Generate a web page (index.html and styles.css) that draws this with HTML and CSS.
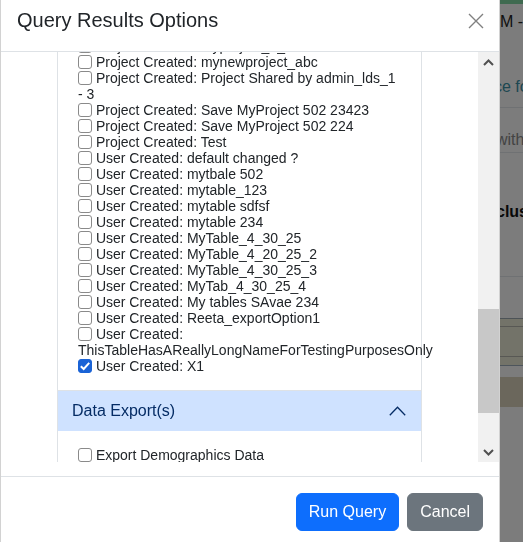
FILE: index.html
```html
<!DOCTYPE html>
<html lang="en">
<head>
    <meta charset="UTF-8">
    <meta name="viewport" content="width=device-width, initial-scale=1.0">
    <title>Query Results Options</title>
    <link rel="stylesheet" href="styles.css">
</head>
<body>
    <!-- Page behind the modal -->
    <div class="page">
        <div class="page-topbar"></div>
        <div class="page-title">M -</div>
        <div class="page-row page-link">ce fo</div>
        <div class="page-row page-muted">with</div>
        <div class="page-row page-bold">clus</div>
        <div class="page-gap"></div>
        <div class="page-band band-a"></div>
        <div class="page-band band-b"></div>
        <div class="page-band band-c"></div>
        <div class="page-band band-d"></div>
        <div class="page-band band-e"></div>
    </div>
    <div class="backdrop"></div>

    <!-- Modal -->
    <div class="modal">
        <div class="modal-header">
            <h5 class="modal-title">Query Results Options</h5>
            <button class="btn-close" aria-label="Close">
                <svg width="16" height="16" viewBox="0 0 16 16"><path d="M1 1L15 15M15 1L1 15" stroke="#808080" stroke-width="1.4" fill="none"/></svg>
            </button>
        </div>

        <div class="modal-body">
            <div class="scroll-area">
                <div class="scroll-content">
                    <div class="accordion">
                        <div class="accordion-item">
                            <div class="accordion-body">
                                <label class="check-row"><input type="checkbox"> Project Created: myproject_1_abc</label>
                                <label class="check-row"><input type="checkbox"> Project Created: mynewproject_abc</label>
                                <label class="check-row"><input type="checkbox"> Project Created: Project Shared by admin_lds_1 - 3</label>
                                <label class="check-row"><input type="checkbox"> Project Created: Save MyProject 502 23423</label>
                                <label class="check-row"><input type="checkbox"> Project Created: Save MyProject 502 224</label>
                                <label class="check-row"><input type="checkbox"> Project Created: Test</label>
                                <label class="check-row"><input type="checkbox"> User Created: default changed ?</label>
                                <label class="check-row"><input type="checkbox"> User Created: mytbale 502</label>
                                <label class="check-row"><input type="checkbox"> User Created: mytable_123</label>
                                <label class="check-row"><input type="checkbox"> User Created: mytable sdfsf</label>
                                <label class="check-row"><input type="checkbox"> User Created: mytable 234</label>
                                <label class="check-row"><input type="checkbox"> User Created: MyTable_4_30_25</label>
                                <label class="check-row"><input type="checkbox"> User Created: MyTable_4_20_25_2</label>
                                <label class="check-row"><input type="checkbox"> User Created: MyTable_4_30_25_3</label>
                                <label class="check-row"><input type="checkbox"> User Created: MyTab_4_30_25_4</label>
                                <label class="check-row"><input type="checkbox"> User Created: My tables SAvae 234</label>
                                <label class="check-row"><input type="checkbox"> User Created: Reeta_exportOption1</label>
                                <label class="check-row"><input type="checkbox"> User Created: ThisTableHasAReallyLongNameForTestingPurposesOnly</label>
                                <label class="check-row"><input type="checkbox" checked> User Created: X1</label>
                            </div>
                        </div>
                        <div class="accordion-item">
                            <button class="accordion-button">
                                <span>Data Export(s)</span>
                                <svg width="17" height="10" viewBox="0 0 17 10"><path d="M0.8 9.2L8.5 1.3L16.2 9.2" stroke="#052c65" stroke-width="1.3" fill="none"/></svg>
                            </button>
                            <div class="accordion-body">
                                <label class="check-row"><input type="checkbox"> Export Demographics Data</label>
                                <label class="check-row"><input type="checkbox"> Export Diagnosis Data</label>
                            </div>
                        </div>
                    </div>
                </div>

                <!-- scrollbar -->
                <div class="scrollbar">
                    <div class="scroll-arrow">
                        <svg width="11" height="7" viewBox="0 0 11 7"><path d="M1 6L5.5 1.5L10 6" stroke="#505050" stroke-width="2" fill="none"/></svg>
                    </div>
                    <div class="scroll-track"><div class="scroll-thumb"></div></div>
                    <div class="scroll-arrow">
                        <svg width="11" height="7" viewBox="0 0 11 7"><path d="M1 1L5.5 5.5L10 1" stroke="#505050" stroke-width="2" fill="none"/></svg>
                    </div>
                </div>
            </div>
        </div>

        <div class="modal-footer">
            <button class="btn btn-primary">Run Query</button>
            <button class="btn btn-secondary">Cancel</button>
        </div>
    </div>
</body>
</html>
```

FILE: styles.css
```css
/* Reset styles */
* {
    margin: 0;
    padding: 0;
    box-sizing: border-box;
}

body {
    font-family: 'Liberation Sans', Arial, sans-serif;
    color: #212529;
    background-color: #f8f8f8;
    overflow: hidden;
}

/* Page behind the modal */
.page {
    margin-left: 490px;
    font-size: 16px;
    white-space: nowrap;
}

.page-topbar {
    height: 4px;
    background-color: #7ed4a0;
    margin-left: -490px;
}

.page-title {
    height: 36px;
    line-height: 36px;
    padding-left: 10px;
    color: #222;
}

.page-row {
    border-bottom: 1px solid #dee2e6;
    line-height: 20px;
}

.page-link {
    height: 68px;
    padding-top: 37px;
    padding-left: 4px;
    color: #3c8fa3;
}

.page-muted {
    height: 45px;
    padding-top: 22px;
    padding-left: 6px;
    color: #888;
}

.page-bold {
    height: 124px;
    padding-top: 49px;
    padding-left: 6px;
    font-weight: bold;
    color: #111;
}

.page-gap {
    height: 42px;
    border-bottom: 1px solid #9aa6ae;
}

.page-band {
    background-color: #e6e6d2;
}

.band-a {
    height: 8px;
    border-bottom: 1px solid #b0b0a8;
}

.band-b {
    height: 30px;
    border-bottom: 1px solid #b0b0a8;
}

.band-c {
    height: 9px;
    border-bottom: 1px solid #9aaab8;
}

.band-d {
    height: 11px;
    background-color: #f8f8f8;
}

.band-e {
    height: 30px;
    background-color: #d6ceb8;
}

.backdrop {
    position: fixed;
    inset: 0;
    background-color: rgba(0, 0, 0, 0.5);
}

/* Modal */
.modal {
    position: fixed;
    top: -10px;
    left: 0;
    width: 500px;
    height: 580px;
    background-color: #fff;
    border: 1px solid rgba(0, 0, 0, 0.175);
    border-radius: 6px;
    display: flex;
    flex-direction: column;
}

.modal-header {
    height: 61px;
    padding: 17px 15px 0 16px;
    border-bottom: 1px solid #dee2e6;
    display: flex;
    justify-content: space-between;
    align-items: flex-start;
}

.modal-title {
    font-size: 20px;
    font-weight: 400;
    line-height: 24px;
}

.btn-close {
    width: 16px;
    height: 24px;
    border: 0;
    background: none;
    display: flex;
    align-items: center;
    justify-content: center;
    margin-top: 1px;
}

.modal-body {
    padding-bottom: 14px;
}

.scroll-area {
    display: flex;
    height: 410px;
}

.scroll-content {
    flex: 1;
    overflow: hidden;
    padding: 0 56px;
}

/* Accordion */
.accordion {
    margin-top: -31px;
}

.accordion-item {
    border: 1px solid #dee2e6;
}

.accordion-item + .accordion-item {
    border-top: 0;
}

.accordion-body {
    padding: 16px 20px;
}

.check-row {
    display: block;
    font-size: 14px;
    line-height: 16px;
}

.check-row input {
    appearance: none;
    margin: 1px 0 0 0;
    width: 14px;
    height: 14px;
    border: 1px solid #8a8a8a;
    border-radius: 3px;
    background-color: #fff;
    vertical-align: top;
}

.check-row input:checked {
    border-color: #1a63d6;
    background-color: #1a63d6;
    background-image: url("data:image/svg+xml,%3Csvg xmlns='http://www.w3.org/2000/svg' viewBox='0 0 14 14'%3E%3Cpath d='M2.8 7.2L5.7 10L11.2 3.9' stroke='%23fff' stroke-width='2' fill='none'/%3E%3C/svg%3E");
    background-position: center;
    background-size: 14px 14px;
}

.accordion-button {
    width: 100%;
    height: 40px;
    border: 0;
    background-color: #cfe2ff;
    color: #052c65;
    font-family: inherit;
    font-size: 16px;
    line-height: 16px;
    padding: 0 15px 0 14px;
    display: flex;
    justify-content: space-between;
    align-items: center;
    text-align: left;
}

/* Scrollbar */
.scrollbar {
    width: 21px;
    background-color: #f1f1f1;
    display: flex;
    flex-direction: column;
}

.scroll-arrow {
    height: 20px;
    display: flex;
    align-items: center;
    justify-content: center;
}

.scroll-track {
    flex: 1;
}

.scroll-thumb {
    margin-top: 237px;
    height: 104px;
    background-color: #c8c8c8;
}

/* Footer */
.modal-footer {
    border-top: 1px solid #dee2e6;
    padding: 16px 16px;
    display: flex;
    justify-content: flex-end;
    gap: 8px;
}

.btn {
    font-family: inherit;
    font-size: 16px;
    line-height: 24px;
    padding: 6px 12px;
    border: 1px solid transparent;
    border-radius: 6px;
    color: #fff;
}

.btn-primary {
    background-color: #0d6efd;
    border-color: #0d6efd;
}

.btn-secondary {
    background-color: #6c757d;
    border-color: #6c757d;
}
```
